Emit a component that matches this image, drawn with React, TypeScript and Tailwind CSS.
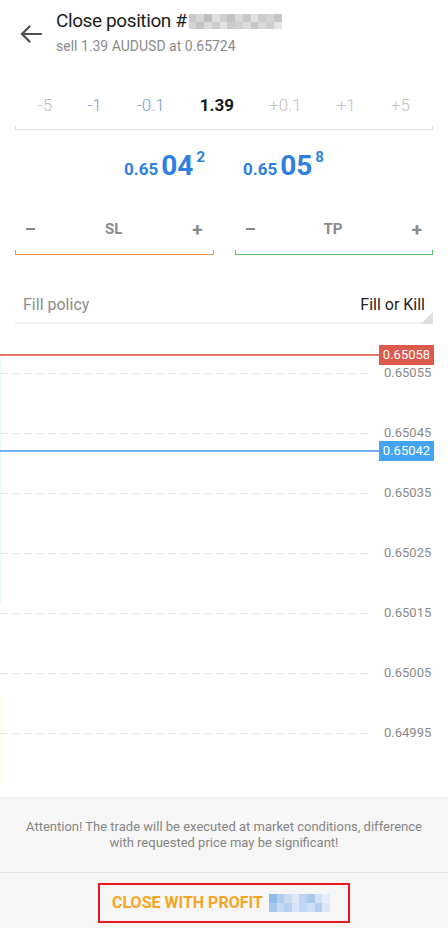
import { useState } from "react"

const steps = [
  { label: "-5", cls: "text-[#bdbdbd]" },
  { label: "-1", cls: "text-[#6f9fcf]" },
  { label: "-0.1", cls: "text-[#6f9fcf]" },
  { label: "1.39", cls: "text-[#1a1a1a] font-bold" },
  { label: "+0.1", cls: "text-[#c2c2c2]" },
  { label: "+1", cls: "text-[#c2c2c2]" },
  { label: "+5", cls: "text-[#c2c2c2]" },
]

// chart grid rows, top offset inside chart
const gridRows = [
  { price: "0.65055", top: 49 },
  { price: "0.65045", top: 109 },
  { price: "0.65035", top: 169 },
  { price: "0.65025", top: 229 },
  { price: "0.65015", top: 289 },
  { price: "0.65005", top: 349 },
  { price: "0.64995", top: 409 },
]

const titleBlur = [
  "#c9c9c9", "#d6d6d6", "#bfbfbf", "#dedede", "#cfcfcf", "#c4c4c4", "#d9d9d9", "#c8c8c8", "#e0e0e0", "#cdcdcd", "#d4d4d4", "#c6c6c6",
  "#d3d3d3", "#c2c2c2", "#dadada", "#cccccc", "#e2e2e2", "#cbcbcb", "#d0d0d0", "#dbdbdb", "#c7c7c7", "#d8d8d8", "#cecece", "#e4e4e4",
]

const profitBlur = [
  "#8dbbea", "#b0cfef", "#c9dcf3", "#dfe9f6", "#bcd4f1", "#a9caee", "#d2e2f5", "#e3ecf7",
  "#a6c8ee", "#c4daf3", "#b6d1f0", "#d6e5f6", "#c0d7f2", "#cfe0f5", "#b3cff0", "#dde8f6",
]

function Blur({ colors, cols, className }: { colors: string[]; cols: string; className: string }) {
  return (
    <div className={`grid ${cols} ${className}`}>
      {colors.map((c, i) => (
        <div key={i} style={{ backgroundColor: c }} />
      ))}
    </div>
  )
}

function StopBox({ label, color }: { label: string; color: string }) {
  return (
    <div className="flex-1">
      <div className="h-[48px] pt-[6px] flex items-center justify-between px-[11px] text-[#8a8a8a] font-bold text-[15px]">
        <span className="w-[9px] h-[2.5px] bg-[#8a8a8a]" />
        <span>{label}</span>
        <span className="text-[19px] font-bold leading-none">+</span>
      </div>
      <div className={`h-[5px] border-x border-b ${color}`} />
    </div>
  )
}

export default function App() {
  const [volume] = useState("1.39")

  return (
    <div className="w-[448px] h-[928px] bg-white flex flex-col font-['Roboto',sans-serif] overflow-hidden">
      {/* Header */}
      <div className="h-[64px] flex items-center">
        <div className="w-[56px] pl-[20px] pt-[3px]">
          <svg width="22" height="18" viewBox="0 0 22 18" fill="none" stroke="#4f4f4f" strokeWidth="2.2" strokeLinecap="round">
            <path d="M2 9 H21" />
            <path d="M9.5 1.5 L2 9 L9.5 16.5" />
          </svg>
        </div>
        <div>
          <div className="flex items-center h-[24px]">
            <span className="text-[19px] tracking-[-0.4px] text-[#1c1c1c]">Close position #</span>
            <Blur colors={titleBlur} cols="grid-cols-12" className="w-[93px] h-[15px] ml-[2px]" />
          </div>
          <div className="text-[14px] leading-[18px] mt-[3px] text-[#8a8a8a]">sell {volume} AUDUSD at 0.65724</div>
        </div>
      </div>

      {/* Volume steps */}
      <div className="mt-[22px] px-[15px]">
        <div className="h-[40px] flex items-center justify-between px-[23px] text-[17px] font-light">
          {steps.map((s) => (
            <span key={s.label} className={s.cls}>{s.label}</span>
          ))}
        </div>
        <div className="h-[4px] border-x border-b border-[#e2e2e2]" />
      </div>

      {/* Prices */}
      <div className="h-[72px] flex items-center justify-center gap-[38px] text-[#2f7fe0] font-bold">
        <div className="flex items-end">
          <span className="text-[17px] leading-[20px] mb-[1px]">0.65</span>
          <span className="text-[28px] leading-[28px] ml-[3px]">04</span>
          <span className="text-[15px] leading-none self-start ml-[3px] -mt-[2px]">2</span>
        </div>
        <div className="flex items-end">
          <span className="text-[17px] leading-[20px] mb-[1px]">0.65</span>
          <span className="text-[28px] leading-[28px] ml-[3px]">05</span>
          <span className="text-[15px] leading-none self-start ml-[3px] -mt-[2px]">8</span>
        </div>
      </div>

      {/* SL / TP */}
      <div className="flex gap-[21px] px-[15px]">
        <StopBox label="SL" color="border-[#e8954a]" />
        <StopBox label="TP" color="border-[#5cbf6a]" />
      </div>

      {/* Fill policy */}
      <div className="mt-[33px] mx-[15px] relative">
        <div className="h-[34px] flex items-center justify-between px-[8px] text-[16px]">
          <span className="text-[#8c8c8c]">Fill policy</span>
          <span className="text-[#222]">Fill or Kill</span>
        </div>
        <div className="h-[2px] bg-[#f0f0f0]" />
        <div className="absolute right-0 bottom-0 w-0 h-0 border-l-[12px] border-l-transparent border-b-[12px] border-b-[#dedede]" />
      </div>

      {/* Chart */}
      <div className="relative h-[473px]">
        <div className="absolute left-0 top-[30px] w-px h-[250px] bg-[#e6fafc]" />
        <div className="absolute left-0 top-[370px] w-px h-[90px] bg-[#fbfbe6]" />
        {gridRows.map((r) => (
          <div key={r.price} className="absolute left-0 right-0 flex items-center" style={{ top: r.top - 8 }}>
            <div className="w-[368px] h-px bg-[repeating-linear-gradient(90deg,#e6e6e6_0_8px,transparent_8px_12px)]" />
            <span className="ml-[16px] text-[13px] leading-[16px] text-[#8a8a8a]">{r.price}</span>
          </div>
        ))}

        {/* ask line */}
        <div className="absolute left-0 right-[14px] top-[21px] flex items-center">
          <div className="flex-1 h-[1.5px] bg-[#e5786c]" />
          <div className="w-[55px] h-[20px] bg-[#dc5a4c] text-white text-[13px] flex items-center justify-center">0.65058</div>
        </div>

        {/* bid line */}
        <div className="absolute left-0 right-[14px] top-[117px] flex items-center">
          <div className="flex-1 h-[1.5px] bg-[#74b1ee]" />
          <div className="w-[55px] h-[20px] bg-[#44a4f4] text-white text-[13px] flex items-center justify-center">0.65042</div>
        </div>
      </div>

      {/* Footer */}
      <div className="flex-1 bg-[#f6f6f6] border-t border-[#ececec] flex flex-col">
        <div className="h-[75px] flex items-center justify-center border-b border-[#e4e4e4] px-[16px]">
          <p className="text-center text-[13px] leading-[16px] text-[#858585]">
            Attention! The trade will be executed at market conditions, difference with requested price may be significant!
          </p>
        </div>
        <div className="flex-1 flex justify-center pt-[10px]">
          <button className="w-[252px] h-[40px] border-2 border-[#e8181c] flex items-center pl-[12px] gap-[6px]">
            <span className="text-[#f5a524] font-bold text-[16px]">CLOSE WITH PROFIT</span>
            <Blur colors={profitBlur} cols="grid-cols-8" className="w-[61px] h-[18px]" />
          </button>
        </div>
      </div>
    </div>
  )
}
